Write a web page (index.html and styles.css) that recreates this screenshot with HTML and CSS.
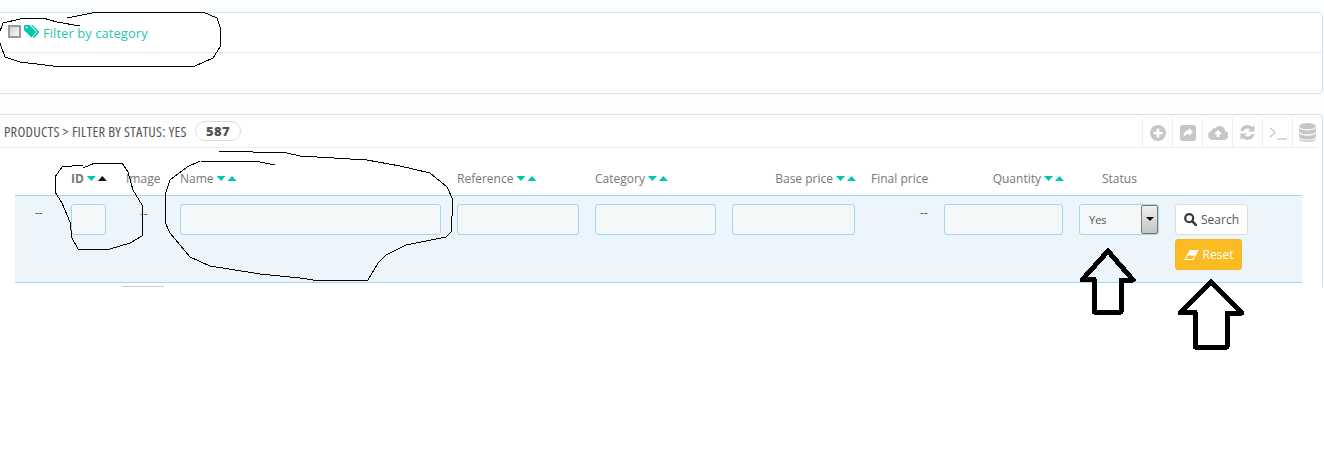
FILE: index.html
```html
<!DOCTYPE html>
<html lang="en">
<head>
<meta charset="utf-8">
<title>Products</title>
<link rel="stylesheet" href="styles.css">
</head>
<body>
<main class="page">
  <section class="panel filter-panel">
    <header class="filter-head">
      <input type="checkbox" class="check">
      <svg class="tag-icon" viewBox="0 0 16 13"><path d="M0 1.200Q0 0 1.200 0H5.400L12.300 6.900 7.400 12.500 0 5Z"/><path d="M7 0H8.400L15.500 7 10.300 13 9 11.800 13.200 7Z"/><circle cx="2.600" cy="2.600" r="1" fill="#fff"/></svg>
      <a class="filter-link">Filter by category</a>
    </header>
    <div class="filter-body"></div>
  </section>

  <section class="panel list-panel">
    <header class="list-head">
      <span class="list-title">PRODUCTS &gt; FILTER BY STATUS: YES</span>
      <span class="badge">587</span>
      <div class="tools">
        <span class="tool"><svg viewBox="0 0 16 16" width="16" height="16"><path fill-rule="evenodd" d="M8 0a8 8 0 1 0 0 16A8 8 0 0 0 8 0ZM6.700 3.500h2.600v3.200h3.200v2.600H9.300v3.200H6.700V9.300H3.500V6.700h3.200Z"/></svg></span>
        <span class="tool"><svg viewBox="0 0 16 16" width="16" height="16"><path fill-rule="evenodd" d="M3 0h10a3 3 0 0 1 3 3v10a3 3 0 0 1-3 3H3a3 3 0 0 1-3-3V3a3 3 0 0 1 3-3ZM9 3v2C6 5 3.500 7 3.500 12.500 5 9.500 7 9 9 9v2l4-4Z"/></svg></span>
        <span class="tool"><svg viewBox="0 0 20 15" width="20" height="15"><path fill-rule="evenodd" d="M4.500 15a4.500 4.500 0 0 1-1.200-8.800A3.500 3.500 0 0 1 7.500 3.300 5.200 5.200 0 0 1 17 6a4.600 4.600 0 0 1-1.500 9ZM10 5 6 9h2.500v3h3V9H14Z"/></svg></span>
        <span class="tool"><svg viewBox="0 0 17 17" width="17" height="17"><path d="M8.500 1a7.500 7.500 0 0 1 5 1.900L15.500 1v6.500H9l2.100-2.100A4.300 4.300 0 0 0 4.500 7H1.300A7.500 7.500 0 0 1 8.500 1ZM1.500 9.500H8l-2.100 2.100A4.300 4.300 0 0 0 12.500 10h3.200A7.500 7.500 0 0 1 3.500 14.100L1.500 16Z"/></svg></span>
        <span class="tool"><svg viewBox="0 0 18 14" width="18" height="14" class="line-icon"><path d="M1 2 6 6.500 1 11"/><path d="M8 13H18"/></svg></span>
        <span class="tool"><svg viewBox="0 0 16 18" width="17" height="19"><ellipse cx="8" cy="3" rx="8" ry="3"/><path d="M0 4.500C1 6.500 4 7 8 7s7-.5 8-2.500V8c-1 2-4 2.700-8 2.700S1 10 0 8ZM0 9.500c1 2 4 2.500 8 2.500s7-.5 8-2.500V13c-1 2-4 2.700-8 2.700S1 15 0 13Z"/><path d="M0 14.200c1 2 4 2.300 8 2.300s7-.3 8-2.300V15c0 2-4 3-8 3s-8-1-8-3Z"/></svg></span>
      </div>
    </header>

    <div class="grid heading-row">
      <span></span>
      <span class="th strong">ID<i class="sort"><b class="down"></b><b class="up dark"></b></i></span>
      <span class="th image-head">Image</span>
      <span class="th">Name<i class="sort"><b class="down"></b><b class="up"></b></i></span>
      <span class="th">Reference<i class="sort"><b class="down"></b><b class="up"></b></i></span>
      <span class="th">Category<i class="sort"><b class="down"></b><b class="up"></b></i></span>
      <span class="th right">Base price<i class="sort"><b class="down"></b><b class="up"></b></i></span>
      <span class="th">Final price</span>
      <span class="th right">Quantity<i class="sort"><b class="down"></b><b class="up"></b></i></span>
      <span class="th center">Status</span>
      <span></span>
    </div>

    <div class="grid filter-row">
      <span class="dash first">--</span>
      <input class="field field-id" type="text">
      <span class="dash image">--</span>
      <input class="field" type="text">
      <input class="field" type="text">
      <input class="field" type="text">
      <input class="field" type="text">
      <span class="dash final">--</span>
      <input class="field" type="text">
      <div class="select field">
        <span class="select-value">Yes</span>
        <span class="select-arrow"></span>
      </div>
      <div class="actions">
        <button class="btn search" type="button">
          <svg viewBox="0 0 14 14" width="13" height="13"><circle cx="5.600" cy="5.600" r="4.300" fill="none" stroke="#363a41" stroke-width="2.400"/><path d="M8.800 8.800 13 13" stroke="#363a41" stroke-width="2.800" stroke-linecap="round"/></svg>
          Search
        </button>
        <button class="btn reset" type="button">
          <svg viewBox="0 0 16 11" width="15" height="10"><path d="M6 0H16L10 11H0Z" fill="#fff"/><path d="M4.300 6 1.800 10H9.400L11.600 6Z" fill="#fbbb22"/></svg>
          Reset
        </button>
      </div>
    </div>
    <div class="pager-stub"></div>
  </section>
</main>

<svg class="ink" width="1324" height="460" viewBox="0 0 1324 460">
  <g class="ink-thin">
    <path d="M80 26 57 22 43 18 20 19 3 23-2 37 0 43 5 57 20 62 53 66H195L213 58 220 47 221 30 217 18 203 12H97L67 18"/>
    <path d="M83 168 95 163H122L128 172 133 190 142 205V236L130 243 110 249H78L72 238 70 222 62 203 55 192V177L62 167 83 165"/>
    <path d="M275 165 260 162 200 161 187 167 170 180 165 195V222L170 233 190 257 210 266 260 274 300 278 313 280H368L378 263 386 255 406 245 446 237 451 232 453 200 447 187 430 173 400 166 367 160 300 156 287 153 218 151"/>
  </g>
  <g class="ink-thick">
    <path d="M1108 251 1133 280H1121V312H1094V279L1082 280Z"/>
    <path d="M1211 282 1242 313H1227V347H1195V312L1180 313Z"/>
  </g>
</svg>
</body>
</html>
```

FILE: styles.css
```css
* { box-sizing: border-box; }
html, body { margin: 0; padding: 0; background: #fff; }
body {
  width: 1324px;
  height: 460px;
  overflow: hidden;
  position: relative;
  font-family: "Open Sans", "Liberation Sans", sans-serif;
  font-size: 12px;
  color: #666;
}
.page {
  height: 287px;
  padding: 12px 0 0;
  background: #fbfdff;
  overflow: hidden;
}
.panel {
  margin: 0 0 0 -6px;
  width: 1329px;
  background: #fff;
  border: 1px solid #d3e4ef;
  border-radius: 5px;
}
.filter-panel { height: 82px; }
.filter-head {
  height: 40px;
  display: flex;
  align-items: center;
  padding: 0 0 0 13px;
  border-bottom: 1px solid #e6e6e6;
}
.check {
  appearance: none;
  flex: none;
  width: 13px;
  height: 13px;
  margin: 0 3px 3px 0;
  border: 2px solid #9a9a9a;
  background: linear-gradient(135deg, #d4d4d4, #f8f8f8);
}
.tag-icon { width: 16px; height: 13px; fill: #00c8ac; margin: 0 3px 2px 0; flex: none; }
.filter-link { color: #1fc8b0; font-size: 13px; line-height: 18px; margin-top: 1px; letter-spacing: 0.050px; }
.filter-body { height: 40px; }

.list-panel { margin-top: 20px; height: 180px; padding-left: 5px; border-bottom: 0; border-radius: 5px 5px 0 0; }
.list-head {
  height: 33px;
  display: flex;
  align-items: center;
  padding: 0 0 0 4px;
  border-bottom: 1px solid #eee;
  margin-right: 5px;
}
.list-title {
  flex: none;
  width: 183px;
  white-space: nowrap;
  font-family: "Open Sans", "Liberation Sans", sans-serif;
  font-stretch: 75%;
  font-size: 14.500px;
  letter-spacing: 0.250px;
  color: #555;
}
.badge {
  flex: none;
  margin-left: 8px;
  width: 46px;
  height: 20px;
  border: 1px solid #ddd;
  border-radius: 10px;
  text-align: center;
  line-height: 18px;
  font-weight: 800;
  font-size: 13px;
  letter-spacing: 0.300px;
  color: #555;
}
.tools { margin: 0 -5px 0 auto; display: flex; height: 32px; padding-top: 3px; }
.tool {
  width: 30px;
  height: 29px;
  display: flex;
  align-items: center;
  justify-content: center;
  border-left: 1px solid #eee;
  fill: #c6c6c6;
}
.line-icon { fill: none; stroke: #c6c6c6; stroke-width: 1.300; }

.grid {
  display: grid;
  grid-template-columns: 56px 56px 53px 277px 138px 137px 139px 73px 135px 96px 127px;
  margin-left: 15px;
  width: 1287px;
}
.heading-row { height: 47px; padding-top: 23px; }
.th { line-height: 16px; white-space: nowrap; color: #777; width: max-content; }
.image-head { margin-left: -1px; }
.strong { font-weight: 700; }
.right { justify-self: end; margin-right: 15px; }
.center { justify-self: start; margin-left: 23px; }
.sort { display: inline-flex; gap: 2px; margin-left: 3px; vertical-align: 2px; }
.sort b { display: block; width: 9px; height: 5px; background: #00c8ac; }
.down { clip-path: polygon(0 0, 100% 0, 50% 100%); }
.up { clip-path: polygon(50% 0, 100% 100%, 0 100%); }
.sort .up.dark { background: #111; }

.filter-row {
  height: 88px;
  padding-top: 8px;
  background: #ecf5fb;
  border-top: 1px solid #a6d5ef;
  border-bottom: 1px solid #a6d5ef;
  align-items: start;
}
.field {
  height: 31px;
  background: #f4f8f9;
  border: 1px solid #a6d5ef;
  border-radius: 3px;
  padding: 0;
  margin: 0;
}
input.field { width: calc(100% - 16px); }
input.field-id { width: 35px; }
.dash { color: #555; line-height: 16px; }
.first { margin: 1px 0 0 20px; }
.image { margin: 2px 0 0 13px; }
.final { margin: 1px 0 0 49px; }
.select {
  width: 80px;
  display: flex;
  align-items: center;
  justify-content: space-between;
  padding: 0 0 0 9px;
  font-size: 11px;
  color: #555;
}
.select-arrow {
  width: 17px;
  height: 29px;
  position: relative;
  background: linear-gradient(#f0f0f0, #c4c4c4);
  border: 1px solid #777;
  border-radius: 2px;
}
.select-arrow::after {
  content: "";
  position: absolute;
  left: 3.500px;
  top: 11px;
  border-left: 4px solid transparent;
  border-right: 4px solid transparent;
  border-top: 4px solid #111;
}
.actions { display: flex; flex-direction: column; align-items: flex-start; gap: 4px; }
.btn {
  height: 31px;
  display: flex;
  align-items: center;
  gap: 4px;
  border-radius: 3px;
  padding: 0;
  font: 12px "Open Sans", "Liberation Sans", sans-serif;
  justify-content: center;
}
.search { width: 73px; background: #fff; border: 1px solid #dcdcdc; color: #555; }
.reset { width: 67px; background: #fbbb22; border: 1px solid #f4b41e; color: #fff; }
.pager-stub { width: 42px; height: 1px; margin: 3px 0 0 122px; background: #ccc; }

.ink { position: absolute; left: 0; top: 0; pointer-events: none; }
.ink path { fill: none; shape-rendering: crispEdges; stroke-linecap: round; }
.ink-thin path { stroke: #000; stroke-width: 1; stroke-linejoin: round; }
.ink-thick path { stroke: #000; stroke-width: 5; stroke-linejoin: round; }
```
